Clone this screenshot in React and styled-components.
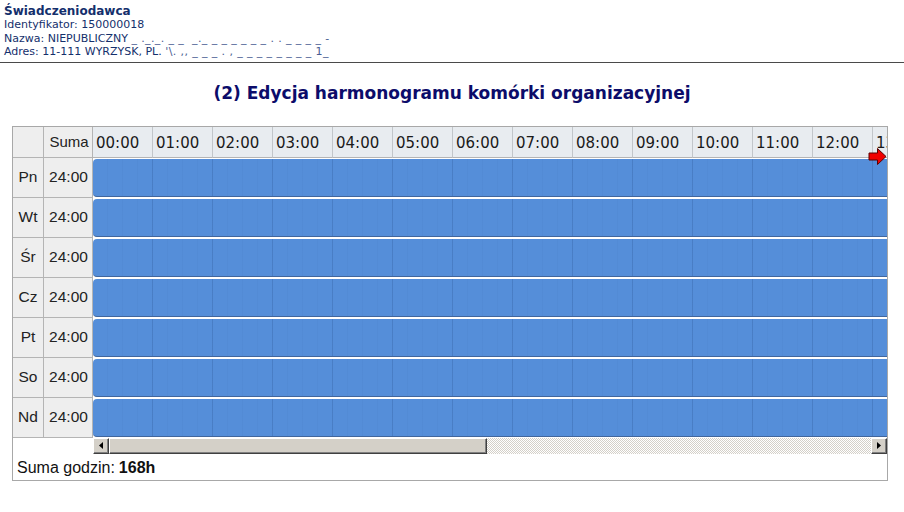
import React from 'react';
import styled, { createGlobalStyle } from 'styled-components';

const GlobalStyle = createGlobalStyle`
  html, body {
    margin: 0;
    padding: 0;
    background: #ffffff;
  }
  body {
    font-family: "DejaVu Sans", Verdana, sans-serif;
  }
`;

const days = ['Pn', 'Wt', 'Śr', 'Cz', 'Pt', 'So', 'Nd'];
const hours = Array.from({ length: 24 }, (_, i) => `${String(i).padStart(2, '0')}:00`);

function ArrowIcon() {
  return (
    <svg width="19" height="19" viewBox="0 0 19 19">
      <polygon
        points="1,6 9.5,6 9.5,1.5 18,9.5 9.5,17.5 9.5,13 1,13"
        fill="#f00000"
        stroke="#5a0000"
        strokeWidth="1"
        strokeLinejoin="round"
      />
    </svg>
  );
}

function Triangle({ dir }) {
  return (
    <svg width="4" height="7" viewBox="0 0 4 7">
      {dir === 'left' ? (
        <polygon points="4,0 0,3.5 4,7" fill="#000" />
      ) : (
        <polygon points="0,0 4,3.5 0,7" fill="#000" />
      )}
    </svg>
  );
}

function App() {
  return (
    <>
      <GlobalStyle />
      <Page>
        <Provider>
          <ProviderName>Świadczeniodawca</ProviderName>
          <InfoLine>Identyfikator: 150000018</InfoLine>
          <InfoLine>
            Nazwa: NIEPUBLICZNY <Redacted>_ ._._. _ _  _._ _ _ _ _ _ _ . . _ _ _ _ -</Redacted>
          </InfoLine>
          <InfoLine>
            Adres: 11-111 WYRZYSK, PL. <Redacted>'\. ,, _ _ _ . , _ _ _ _ _ _ _ _ 1_</Redacted>
          </InfoLine>
        </Provider>
        <Rule />
        <Title>(2) Edycja harmonogramu komórki organizacyjnej</Title>
        <Schedule>
          <Grid>
            <HeadCell />
            <HeadCell>Suma</HeadCell>
            <Timeline>
              <HourRow>
                {hours.map(h => (
                  <HourCell key={h}>{h}</HourCell>
                ))}
              </HourRow>
              {days.map(d => (
                <TrackRow key={d}>
                  <Bar />
                </TrackRow>
              ))}
              <ScrollBar>
                <ScrollButton>
                  <Triangle dir="left" />
                </ScrollButton>
                <Thumb />
                <ScrollTrack />
                <ScrollButton>
                  <Triangle dir="right" />
                </ScrollButton>
              </ScrollBar>
              <ArrowMark>
                <ArrowIcon />
              </ArrowMark>
            </Timeline>
            {days.map(d => (
              <React.Fragment key={d}>
                <DayCell>{d}</DayCell>
                <SumCell>24:00</SumCell>
              </React.Fragment>
            ))}
            <BlankCell />
          </Grid>
          <Footer>
            Suma godzin: <strong>168h</strong>
          </Footer>
        </Schedule>
      </Page>
    </>
  );
}

const Page = styled.div`
  width: 904px;
`;

const Provider = styled.div`
  padding: 4px 4px 0 4px;
  color: #142f6c;
`;

const ProviderName = styled.div`
  font-weight: bold;
  font-size: 12px;
  line-height: 14px;
`;

const InfoLine = styled.div`
  font-size: 11px;
  line-height: 13.5px;
  white-space: pre;
`;

const Redacted = styled.span`
  color: #4a5d92;
  letter-spacing: 0.4px;
`;

const Rule = styled.div`
  margin-top: 3px;
  height: 1px;
  background: #4a4a4a;
`;

const Title = styled.h1`
  margin: 0;
  padding: 19px 0 0 0;
  height: 44px;
  text-align: center;
  font-family: "DejaVu Sans", Verdana, sans-serif;
  font-size: 17px;
  font-weight: bold;
  line-height: 22px;
  color: #0c0c6a;
`;

const Schedule = styled.div`
  margin-left: 12px;
  width: 874px;
  border: 1px solid #a8a8a8;
  background: #ffffff;
`;

const Grid = styled.div`
  display: grid;
  grid-template-columns: 31px 49px 1fr;
  grid-template-rows: 31px repeat(7, 40px) 16px;
`;

const cellBase = `
  box-sizing: border-box;
  display: flex;
  align-items: center;
  border-right: 1px solid #b4b4b4;
  border-bottom: 1px solid #b4b4b4;
  background: #eeeeee;
  font-family: "Liberation Sans", Arial, sans-serif;
  font-size: 15px;
  color: #222222;
`;

const HeadCell = styled.div`
  ${cellBase}
  justify-content: center;
  padding-left: 2px;
`;

const DayCell = styled.div`
  ${cellBase}
  grid-column: 1;
  justify-content: center;
  font-size: 15.5px;
`;

const SumCell = styled.div`
  ${cellBase}
  grid-column: 2;
  justify-content: center;
  font-size: 15.5px;
  padding-left: 1px;
`;

const BlankCell = styled.div`
  grid-column: 1 / span 2;
  background: #ffffff;
`;

const Timeline = styled.div`
  position: relative;
  grid-column: 3;
  grid-row: 1 / span 9;
  display: flex;
  flex-direction: column;
  overflow: hidden;
  min-width: 0;
`;

const HourRow = styled.div`
  display: flex;
  height: 31px;
  flex-shrink: 0;
`;

const HourCell = styled.div`
  box-sizing: border-box;
  flex: 0 0 60px;
  display: flex;
  align-items: center;
  padding: 2px 0 0 3px;
  border-right: 1px solid #c2c6ca;
  border-bottom: 1px solid #b4b4b4;
  background: #e8ecf0;
  font-family: "DejaVu Sans", Verdana, sans-serif;
  font-size: 15px;
  color: #1a1a1a;
`;

const TrackRow = styled.div`
  box-sizing: border-box;
  height: 40px;
  padding: 1px 0;
  flex-shrink: 0;
`;

const Bar = styled.div`
  box-sizing: border-box;
  width: 1440px;
  height: 38px;
  border-radius: 4px 0 0 4px;
  border-bottom: 1px solid #41669c;
  background:
    repeating-linear-gradient(
      to right,
      transparent 0 59px,
      rgba(40, 80, 140, 0.22) 59px 60px
    ),
    repeating-linear-gradient(
      to right,
      transparent 0 14px,
      rgba(40, 80, 140, 0.05) 14px 15px
    ),
    #558ed9;
`;

const ScrollBar = styled.div`
  display: flex;
  height: 16px;
  flex-shrink: 0;
`;

const bevel = `
  box-sizing: border-box;
  background: #d4d0c8;
  border-top: 1px solid #ffffff;
  border-left: 1px solid #ffffff;
  border-right: 1px solid #404040;
  border-bottom: 1px solid #404040;
  box-shadow: inset -1px -1px 0 #808080, inset 1px 1px 0 #d4d0c8;
`;

const ScrollButton = styled.div`
  ${bevel}
  flex: 0 0 16px;
  display: flex;
  align-items: center;
  justify-content: center;
`;

const Thumb = styled.div`
  ${bevel}
  flex: 0 0 378px;
`;

const ScrollTrack = styled.div`
  flex: 1;
  background: repeating-conic-gradient(#d4d0c8 0 25%, #ffffff 0 50%) 0 0 / 2px 2px;
`;

const ArrowMark = styled.div`
  position: absolute;
  top: 20px;
  right: 0;
  width: 19px;
  height: 19px;
`;

const Footer = styled.div`
  box-sizing: border-box;
  height: 26px;
  display: flex;
  align-items: center;
  padding: 3px 0 0 4px;
  font-family: "Liberation Sans", Arial, sans-serif;
  font-size: 16px;
  color: #111111;

  & > strong {
    margin-left: 4px;
  }
`;

export default App;
